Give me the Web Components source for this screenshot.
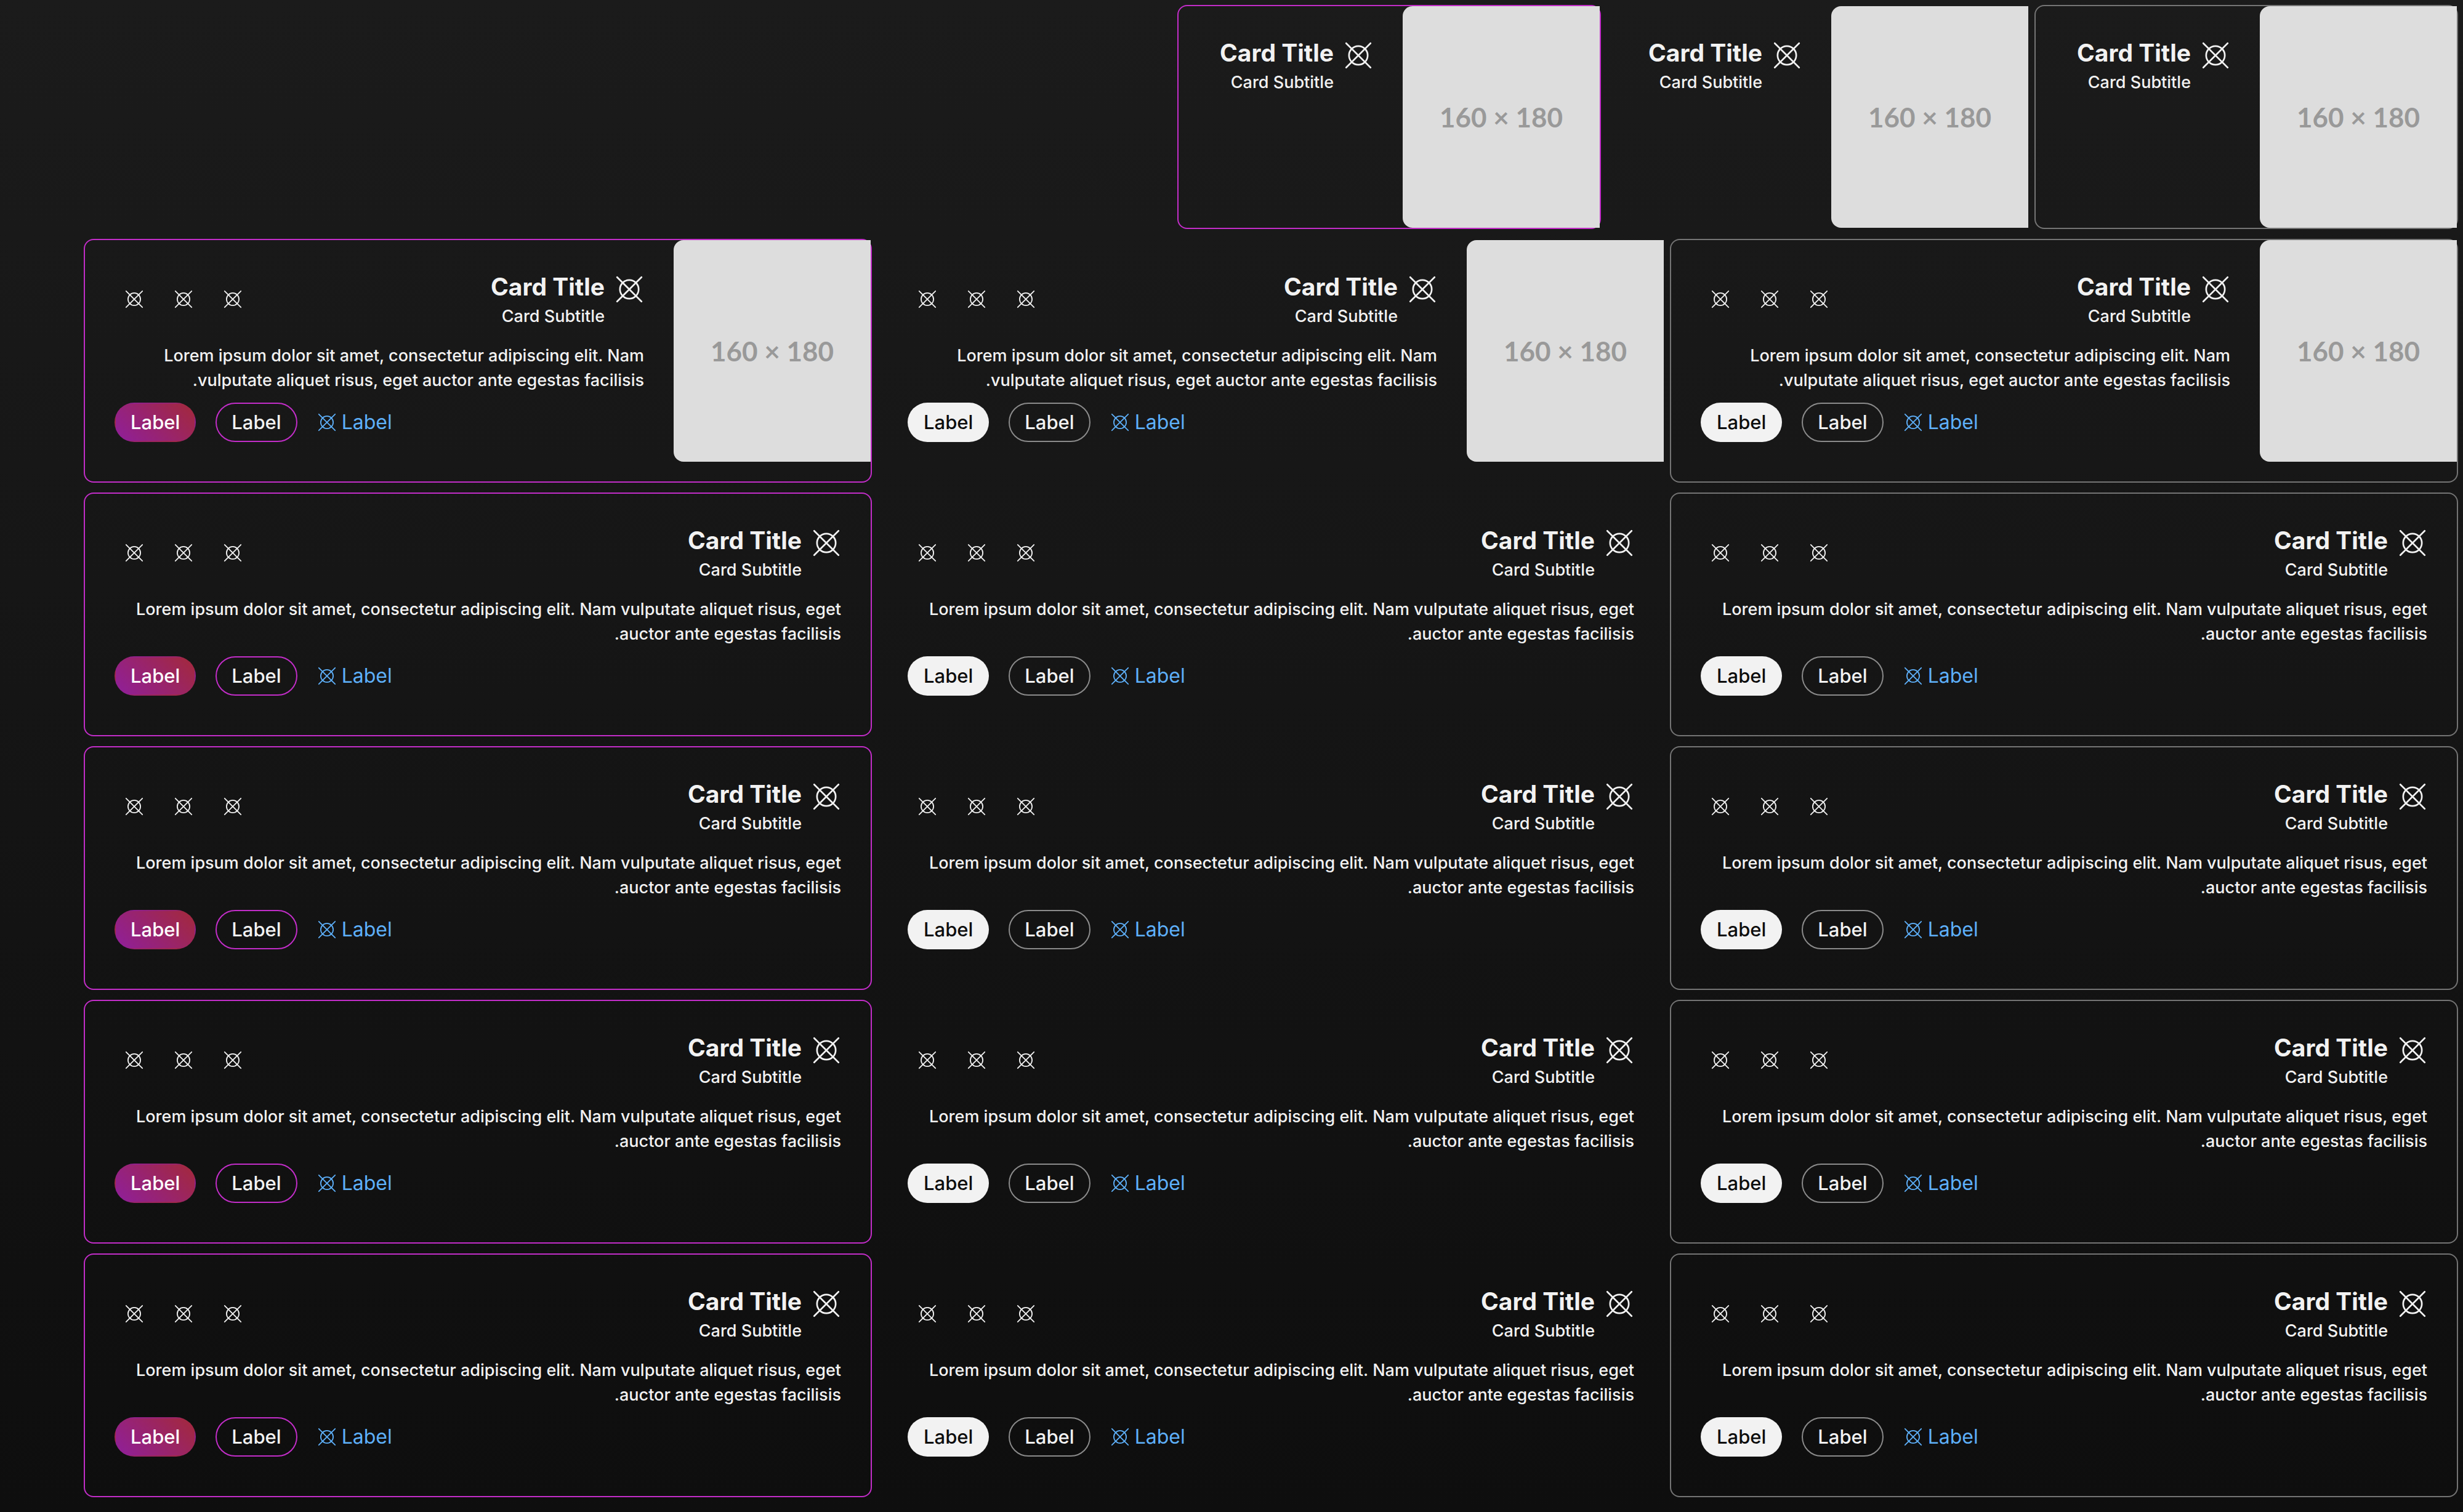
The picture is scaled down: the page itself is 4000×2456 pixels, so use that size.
<!DOCTYPE html>
<html lang="en" dir="rtl">
<head>
<meta charset="utf-8">
<title>Cards</title>
<style>
html{min-height:100%;background:linear-gradient(#1b1b1b,#0e0e0e)}
body{margin:0;color:#f2f2f2;font-family:Inter,"Liberation Sans",sans-serif}
</style>
</head>
<body>
<card-gallery></card-gallery>
<script>
class UiIcon extends HTMLElement {
  constructor() {
    super();
    this.attachShadow({mode: 'open'}).innerHTML = `
      <style>
        :host{display:block;flex:none;width:var(--icon-size,32px);height:var(--icon-size,32px)}
        svg{display:block;width:100%;height:100%;fill:none;stroke:currentColor;stroke-linecap:round}
      </style>
      <svg viewBox="0 0 32 32" stroke-width="1.8" aria-hidden="true">
        <circle cx="16" cy="16" r="10.1"/>
        <path d="M2.8 2.8 29.2 29.2M29.2 2.8 2.8 29.2"/>
      </svg>`;
  }
}
class PlaceholderImage extends HTMLElement {
  constructor() {
    super();
    this.attachShadow({mode: 'open'}).innerHTML = `
      <style>
        :host{display:flex;flex:none;align-items:center;justify-content:center;width:320px;height:360px;
          background:#ddd;color:#999;border-start-end-radius:16px;border-end-end-radius:16px;
          font:700 44px/56px Lato,sans-serif}
        span{direction:ltr}
      </style>
      <span><slot></slot></span>`;
  }
}
class UiButton extends HTMLElement {
  constructor() {
    super();
    this.attachShadow({mode: 'open'}).innerHTML = `
      <style>
        :host{display:block;color:#f2f2f2}
        button{display:block;box-sizing:border-box;height:64px;padding:0 24px;border:2px solid transparent;border-radius:32px;
          background:none;color:inherit;font:500 31px/48px Inter,"Liberation Sans",sans-serif;cursor:pointer}
        :host([kind=outline]) button{border-color:#8b8b8b}
        :host([kind=fill]) button{background:#f2f2f2;color:#0d0d0d}
        :host([kind=outline][accent]) button{border-color:#c22dc8}
        :host([kind=fill][accent]) button{background:linear-gradient(45deg,#8f1f9b,#a3293b);color:#fff}
      </style>
      <button type="button"><slot></slot></button>`;
  }
}
class UiLink extends HTMLElement {
  constructor() {
    super();
    this.attachShadow({mode: 'open'}).innerHTML = `
      <style>
        :host{display:block}
        a{display:flex;align-items:center;gap:8px;color:#5eb0fa;text-decoration:none;font-size:32px;line-height:48px}
      </style>
      <a href="#"><slot></slot><ui-icon></ui-icon></a>`;
  }
}
class UiCard extends HTMLElement {
  connectedCallback() {
    if (this.shadowRoot) return;
    const kind = this.getAttribute('kind');
    const accent = kind === 'accent' ? 'accent' : '';
    const full = !this.hasAttribute('compact');
    const actions = full ? `
      <div class="actions">${[1, 2, 3].map(n => `<button type="button" aria-label="Action ${n}"><ui-icon></ui-icon></button>`).join('')}</div>` : '';
    const rest = full ? `
      <p><slot></slot></p>
      <footer>
        <ui-link>Label</ui-link>
        <ui-button kind="outline" ${accent}>Label</ui-button>
        <ui-button kind="fill" ${accent}>Label</ui-button>
      </footer>` : '';
    this.attachShadow({mode: 'open'}).innerHTML = `
      <style>
        :host{display:flex;align-items:flex-start;box-sizing:border-box;border:2px solid transparent;border-radius:16px}
        :host([kind=accent]){border-color:#c22dc8}
        :host([kind=neutral]){border-color:#747474}
        .content{flex:1;min-width:0;padding:48px 48px 64px}
        :host([compact]) .content{padding-bottom:48px}
        header{display:flex;align-items:center;justify-content:space-between}
        .heading{display:flex;gap:16px}
        .heading>ui-icon{--icon-size:48px;margin-top:8px}
        h3{margin:0;font-size:39px;line-height:56px;font-weight:700}
        .subtitle{font-size:27px;line-height:40px;font-weight:500}
        .actions{display:flex;margin-inline-end:-8px}
        .actions button{display:grid;place-items:center;width:80px;height:80px;padding:0;border:0;background:none;color:inherit}
        p{margin:24px 0 16px;font-size:27px;line-height:40px;font-weight:500}
        footer{display:flex;align-items:center;justify-content:flex-end;gap:32px}
      </style>
      <slot name="media"></slot>
      <div class="content">
        <header>
          <div class="heading">
            <ui-icon></ui-icon>
            <div><h3><slot name="title"></slot></h3><div class="subtitle"><slot name="subtitle"></slot></div></div>
          </div>${actions}
        </header>${rest}
      </div>`;
  }
}
class CardGallery extends HTMLElement {
  constructor() {
    super();
    const kinds = ['neutral', 'plain', 'accent'];
    const text = 'Lorem ipsum dolor sit amet, consectetur adipiscing elit. Nam vulputate aliquet risus, eget auctor ante egestas facilisis.';
    const card = (kind, media, compact) => `
      <ui-card kind="${kind}" ${compact ? 'compact' : ''}>
        ${media ? '<placeholder-image slot="media">160 × 180</placeholder-image>' : ''}
        <span slot="title">Card Title</span>
        <span slot="subtitle">Card Subtitle</span>
        ${compact ? '' : text}
      </ui-card>`;
    const row = (media) => `<div class="row">${kinds.map(k => card(k, media, false)).join('')}</div>`;
    this.attachShadow({mode: 'open'}).innerHTML = `
      <style>
        :host{display:flex;flex-direction:column;gap:16px;padding-block:8px 24px;padding-inline:8px 136px}
        .compact{display:flex;flex-wrap:wrap;gap:8px}
        .compact>ui-card{width:688px}
        .row{display:grid;grid-template-columns:repeat(3,minmax(0,1fr));gap:8px}
      </style>
      <div class="compact">${kinds.map(k => card(k, true, true)).join('')}</div>
      ${[true, false, false, false, false].map(row).join('')}`;
  }
}
customElements.define('ui-icon', UiIcon);
customElements.define('placeholder-image', PlaceholderImage);
customElements.define('ui-button', UiButton);
customElements.define('ui-link', UiLink);
customElements.define('ui-card', UiCard);
customElements.define('card-gallery', CardGallery);
</script>
</body>
</html>
